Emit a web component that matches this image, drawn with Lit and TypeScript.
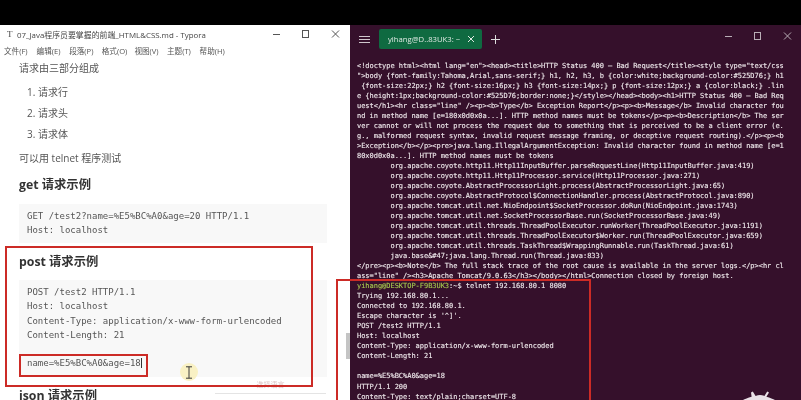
import { LitElement, html, css, svg } from "lit";
import { customElement } from "lit/decorators.js";

const TERM_TOP = [
  `<!doctype html><html lang="en"><head><title>HTTP Status 400 – Bad Request</title><style type="text/css`,
  `">body {font-family:Tahoma,Arial,sans-serif;} h1, h2, h3, b {color:white;background-color:#525D76;} h1`,
  ` {font-size:22px;} h2 {font-size:16px;} h3 {font-size:14px;} p {font-size:12px;} a {color:black;} .lin`,
  `e {height:1px;background-color:#525D76;border:none;}</style></head><body><h1>HTTP Status 400 – Bad Req`,
  `uest</h1><hr class="line" /><p><b>Type</b> Exception Report</p><p><b>Message</b> Invalid character fou`,
  `nd in method name [e=180x0d0x0a...]. HTTP method names must be tokens</p><p><b>Description</b> The ser`,
  `ver cannot or will not process the request due to something that is perceived to be a client error (e.`,
  `g., malformed request syntax, invalid request message framing, or deceptive request routing).</p><p><b`,
  `>Exception</b></p><pre>java.lang.IllegalArgumentException: Invalid character found in method name [e=1`,
  `80x0d0x0a...]. HTTP method names must be tokens`,
  `        org.apache.coyote.http11.Http11InputBuffer.parseRequestLine(Http11InputBuffer.java:419)`,
  `        org.apache.coyote.http11.Http11Processor.service(Http11Processor.java:271)`,
  `        org.apache.coyote.AbstractProcessorLight.process(AbstractProcessorLight.java:65)`,
  `        org.apache.coyote.AbstractProtocol$ConnectionHandler.process(AbstractProtocol.java:890)`,
  `        org.apache.tomcat.util.net.NioEndpoint$SocketProcessor.doRun(NioEndpoint.java:1743)`,
  `        org.apache.tomcat.util.net.SocketProcessorBase.run(SocketProcessorBase.java:49)`,
  `        org.apache.tomcat.util.threads.ThreadPoolExecutor.runWorker(ThreadPoolExecutor.java:1191)`,
  `        org.apache.tomcat.util.threads.ThreadPoolExecutor$Worker.run(ThreadPoolExecutor.java:659)`,
  `        org.apache.tomcat.util.threads.TaskThread$WrappingRunnable.run(TaskThread.java:61)`,
  `        java.base&#47;java.lang.Thread.run(Thread.java:833)`,
  `</pre><p><b>Note</b> The full stack trace of the root cause is available in the server logs.</p><hr cl`,
  `ass="line" /><h3>Apache Tomcat/9.0.63</h3></body></html>Connection closed by foreign host.`,
];

const TERM_BOTTOM = [
  `Trying 192.168.80.1...`,
  `Connected to 192.168.80.1.`,
  `Escape character is '^]'.`,
  `POST /test2 HTTP/1.1`,
  `Host: localhost`,
  `Content-Type: application/x-www-form-urlencoded`,
  `Content-Length: 21`,
  ` `,
  `name=%E5%BC%A0&age=18`,
  `HTTP/1.1 200`,
  `Content-Type: text/plain;charset=UTF-8`,
];

const MENU = ["文件(F)", "编辑(E)", "段落(P)", "格式(O)", "视图(V)", "主题(T)", "帮助(H)"];

const winButtons = (color: string) => svg`
  <svg class="winbtns" width="78" height="12" viewBox="0 0 78 12" fill="none" stroke="${color}" stroke-width="1">
    <path d="M9 6.5h7" />
    <rect x="38.5" y="2.5" width="6" height="7" />
    <path d="M68 2.5l7 7M75 2.5l-7 7" />
  </svg>`;

@customElement("app-root")
export class AppRoot extends LitElement {
  static styles = css`
    :host {
      display: block;
      width: 801px;
      height: 400px;
      overflow: hidden;
      background: #000;
    }
    .screen {
      position: relative;
      width: 801px;
      height: 400px;
      display: flex;
      flex-direction: column;
      filter: blur(0.3px);
    }
    .topbar {
      height: 25px;
      flex: none;
      background: #000;
    }
    .windows {
      flex: 1;
      min-height: 0;
      display: flex;
    }
    .typora {
      width: 350px;
      flex: none;
      background: #fff;
      overflow: hidden;
      position: relative;
      font-family: "Open Sans", "Noto Sans CJK SC", sans-serif;
      color: #555;
    }
    .ty-title {
      height: 18px;
      display: flex;
      align-items: center;
      padding-left: 7px;
      font-size: 7.9px;
      color: #444;
      white-space: nowrap;
    }
    .ty-title .t {
      width: 10px;
      font-family: "Liberation Serif", serif;
      font-size: 9px;
    }
    .ty-title .name {
      flex: 1;
    }
    .winbtns {
      flex: none;
    }
    .ty-title .winbtns {
      margin-right: 8px;
    }
    .menu {
      height: 14px;
      display: flex;
      align-items: center;
      padding-left: 4px;
      font-size: 7.6px;
      color: #555;
      white-space: nowrap;
    }
    .menu span {
      width: 32.6px;
    }
    .doc {
      padding: 3px 23px 0 19px;
    }
    .p {
      font-size: 10px;
      line-height: 16px;
      height: 16px;
    }
    .list {
      margin: 5.5px 0 0;
      padding: 0 0 0 8px;
      list-style: none;
    }
    .list li {
      font-size: 10px;
      line-height: 21px;
      height: 21px;
    }
    .p.after {
      margin-top: 5.5px;
    }
    h3 {
      margin: 10px 0 0;
      font-size: 12.3px;
      line-height: 18px;
      height: 18px;
      font-weight: 700;
      color: #333;
    }
    .code {
      margin-top: 10px;
      background: #f8f8f8;
      padding: 5px 8px;
      font-family: "DejaVu Sans Mono", "Liberation Mono", monospace;
      font-size: 9px;
      line-height: 14.3px;
      color: #555;
      white-space: pre;
    }
    .code.get {
      height: 39px;
      box-sizing: border-box;
    }
    .code.post {
      height: 97px;
      box-sizing: border-box;
      margin-top: 9px;
    }
    .caret {
      border-right: 1px solid #333;
    }
    h3.post {
      margin-top: 10px;
    }
    h3.json {
      margin-top: 9.5px;
    }
    .lang {
      position: absolute;
      left: 215px;
      top: 352px;
      width: 111px;
      height: 17px;
      box-sizing: border-box;
      background: #fff;
      border-bottom: 1px solid #e4e4e4;
      text-align: center;
      font-size: 7px;
      line-height: 16px;
      color: #dcc4c4;
    }
    .hilite {
      position: absolute;
      left: 180px;
      top: 338px;
      width: 18px;
      height: 18px;
      border-radius: 50%;
      background: #f9f1c4;
      display: flex;
      align-items: center;
      justify-content: center;
    }
    .scroll {
      position: absolute;
      right: 0;
      top: 308px;
      width: 4px;
      height: 26px;
      background: #c4c4c4;
    }
    .term {
      flex: 1;
      min-width: 0;
      background: #35102b;
      position: relative;
      overflow: hidden;
    }
    .tabs {
      height: 36px;
      display: flex;
      align-items: flex-start;
      padding-top: 4px;
      box-sizing: border-box;
      color: #ddd;
    }
    .burger {
      width: 29px;
      flex: none;
      height: 20px;
      display: flex;
      align-items: center;
      justify-content: center;
    }
    .tab {
      width: 103px;
      height: 20px;
      flex: none;
      box-sizing: border-box;
      background: #0f6a41;
      border-radius: 2px;
      display: flex;
      align-items: center;
      padding: 0 7px 0 9px;
      font-family: "Open Sans", sans-serif;
      font-size: 7.7px;
      color: #dfe9e3;
      white-space: nowrap;
    }
    .tab .label {
      flex: 1;
    }
    .plus {
      width: 26px;
      height: 20px;
      flex: none;
      display: flex;
      align-items: center;
      justify-content: center;
    }
    .spacer {
      flex: 1;
    }
    .tabs .winbtns {
      margin-top: 1px;
      margin-right: 7px;
    }
    .lines {
      padding-left: 7px;
      font-family: "DejaVu Sans Mono", "Liberation Mono", monospace;
      font-size: 7px;
      letter-spacing: -0.03px;
      line-height: 10.03px;
      color: #efe9ec;
      -webkit-text-stroke: 0.12px #efe9ec;
    }
    .line {
      height: 10.03px;
      white-space: pre;
    }
    .user {
      color: #a6c94e;
      -webkit-text-stroke: 0.12px #a6c94e;
    }
    .frame {
      position: absolute;
      box-sizing: border-box;
      border: 2px solid #cc2b26;
      pointer-events: none;
    }
    .f1 {
      left: 5px;
      top: 246px;
      width: 308px;
      height: 141px;
    }
    .f2 {
      left: 19px;
      top: 354px;
      width: 129px;
      height: 23px;
    }
    .f3 {
      left: 336px;
      top: 279px;
      width: 255px;
      height: 130px;
    }
    .robot {
      position: absolute;
      left: 735px;
      top: 388px;
    }
  `;

  render() {
    return html`
      <div class="screen">
        <div class="topbar"></div>
        <div class="windows">
          <section class="typora">
            <div class="ty-title">
              <span class="t">T</span>
              <span class="name">07_Java程序员要掌握的前端_HTML&amp;CSS.md - Typora</span>
              ${winButtons("#555")}
            </div>
            <div class="menu">${MENU.map((m) => html`<span>${m}</span>`)}</div>
            <div class="doc">
              <div class="p">请求由三部分组成</div>
              <ol class="list">
                <li>1. 请求行</li>
                <li>2. 请求头</li>
                <li>3. 请求体</li>
              </ol>
              <div class="p after">可以用 telnet 程序测试</div>
              <h3>get 请求示例</h3>
              <div class="code get">GET /test2?name=%E5%BC%A0&amp;age=20 HTTP/1.1
Host: localhost</div>
              <h3 class="post">post 请求示例</h3>
              <div class="code post">POST /test2 HTTP/1.1
Host: localhost
Content-Type: application/x-www-form-urlencoded
Content-Length: 21

<span class="caret">name=%E5%BC%A0&amp;age=18</span></div>
              <h3 class="json">json 请求示例</h3>
            </div>
            <div class="lang">选择语言</div>
            <div class="hilite">
              <svg width="8" height="13" viewBox="0 0 8 13" fill="none" stroke="#3a3a3a" stroke-width="1">
                <path d="M1 .8h6M1 12.2h6M4 .8v11.4" />
              </svg>
            </div>
            <div class="scroll"></div>
          </section>
          <section class="term">
            <div class="tabs">
              <div class="burger">
                <svg width="11" height="7" viewBox="0 0 11 7" stroke="#cfc6cc" stroke-width="1">
                  <path d="M0 .5h11M0 3.5h11M0 6.5h11" />
                </svg>
              </div>
              <div class="tab">
                <span class="label">yihang@D..83UK3: ~</span>
                <svg width="8" height="8" viewBox="0 0 8 8" stroke="#dfe9e3" stroke-width="1">
                  <path d="M1 1l6 6M7 1l-6 6" />
                </svg>
              </div>
              <div class="plus">
                <svg width="9" height="9" viewBox="0 0 9 9" stroke="#ddd" stroke-width="1">
                  <path d="M4.5 0v9M0 4.5h9" />
                </svg>
              </div>
              <div class="spacer"></div>
              ${winButtons("#b9aeb6")}
            </div>
            <div class="lines">
              ${TERM_TOP.map((l) => html`<div class="line">${l}</div>`)}
              <div class="line"><span class="user">yihang@DESKTOP-F9B3UK3</span>:~$ telnet 192.168.80.1 8080</div>
              ${TERM_BOTTOM.map((l) => html`<div class="line">${l}</div>`)}
            </div>
          </section>
        </div>
        <div class="frame f1"></div>
        <div class="frame f2"></div>
        <div class="frame f3"></div>
        <svg class="robot" width="50" height="12" viewBox="0 0 50 12" fill="#e9e1e7">
          <path d="M16 4.6l1.8-1 2.8 4.3a12 12 0 0 1 8.8 0l2.8-4.3 1.8 1-2.6 4.2c3.6 1 7 2.6 8.6 3.2H8c1.6-.6 5-2.2 8.6-3.2z" />
        </svg>
      </div>
    `;
  }
}
